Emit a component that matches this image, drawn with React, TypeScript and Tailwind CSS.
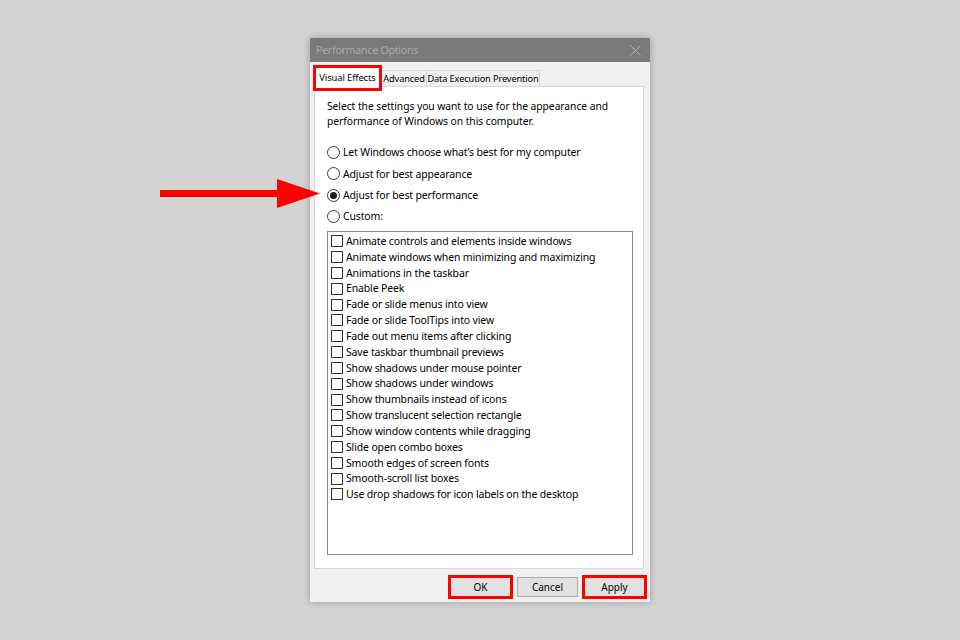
import React from "react";

const items = [
  "Animate controls and elements inside windows",
  "Animate windows when minimizing and maximizing",
  "Animations in the taskbar",
  "Enable Peek",
  "Fade or slide menus into view",
  "Fade or slide ToolTips into view",
  "Fade out menu items after clicking",
  "Save taskbar thumbnail previews",
  "Show shadows under mouse pointer",
  "Show shadows under windows",
  "Show thumbnails instead of icons",
  "Show translucent selection rectangle",
  "Show window contents while dragging",
  "Slide open combo boxes",
  "Smooth edges of screen fonts",
  "Smooth-scroll list boxes",
  "Use drop shadows for icon labels on the desktop",
];

const radios = [
  { label: "Let Windows choose what\u2019s best for my computer", on: false },
  { label: "Adjust for best appearance", on: false },
  { label: "Adjust for best performance", on: true },
  { label: "Custom:", on: false },
];

function Radio({ on }: { on: boolean }) {
  return (
    <span className="w-[13px] h-[13px] rounded-full border border-[#333333] bg-white flex items-center justify-center shrink-0">
      {on && <span className="w-[7px] h-[7px] rounded-full bg-[#1a1a1a]" />}
    </span>
  );
}

export default function App() {
  return (
    <div
      className="relative w-[960px] h-[640px] bg-[#d3d3d3] flex items-center justify-center text-[#000000]"
      style={{ fontFamily: '"Noto Sans", "Open Sans", sans-serif' }}
    >
      {/* red annotation arrow */}
      <svg
        className="absolute left-[160px] top-[178px]"
        width="162"
        height="31"
        viewBox="0 0 162 31"
      >
        <rect x="0" y="12" width="120" height="7" fill="#ff0000" />
        <polygon points="117,1 160,15.5 117,30" fill="#ff0000" />
      </svg>

      <div className="w-[340px] h-[564px] flex flex-col bg-[#f0f0f0] shadow-[0_0_7px_rgba(0,0,0,0.28)]">
        {/* title bar */}
        <div className="h-[24px] bg-[#7a7a7a] flex items-center justify-between pl-[6px] pr-[9px] shrink-0">
          <span className="text-[10.5px] tracking-[-0.2px] text-[#a9a9a9] leading-none whitespace-nowrap">Performance Options</span>
          <svg width="11" height="11" viewBox="0 0 11 11">
            <path d="M0.5 0.5 L10.5 10.5 M10.5 0.5 L0.5 10.5" stroke="#b0b0b0" strokeWidth="1" fill="none" />
          </svg>
        </div>

        {/* tabs + panel */}
        <div className="flex flex-col px-[4px] shrink-0">
          <div className="h-[24px] flex items-end relative z-10">
            <div className="relative ml-[1px] h-[20px] w-[65px] bg-white border border-b-0 border-[#d9d9d9] flex items-center justify-center mb-[-1px]">
              <span className="text-[9.4px] tracking-[-0.1px] leading-none whitespace-nowrap">Visual Effects</span>
              <span className="absolute left-[-3px] right-[-3px] top-[-3px] bottom-[-4px] border-[3px] border-[#ff0000]" />
            </div>
            <div className="h-[16px] w-[46px] bg-[#f0f0f0] border border-b-0 border-[#d9d9d9] flex items-center justify-center ml-[1px]">
              <span className="text-[9.2px] tracking-[-0.1px] leading-none whitespace-nowrap">Advanced</span>
            </div>
            <div className="h-[16px] w-[113px] bg-[#f0f0f0] border border-b-0 border-l-0 border-[#d9d9d9] flex items-center justify-center">
              <span className="text-[9.2px] tracking-[-0.1px] leading-none whitespace-nowrap">Data Execution Prevention</span>
            </div>
          </div>

          <div className="w-[330px] h-[483px] bg-white border border-[#d9d9d9] pl-[12px] pt-[12px] flex flex-col">
            <p className="text-[10.3px] tracking-[-0.05px] leading-[15px] w-[300px]">
              Select the settings you want to use for the appearance and performance of Windows on this computer.
            </p>
            <div className="mt-[13px] flex flex-col">
              {radios.map((r) => (
                <div key={r.label} className="h-[21.33px] flex items-center gap-[3px]">
                  <Radio on={r.on} />
                  <span className="text-[10.5px] tracking-[-0.15px] leading-none whitespace-nowrap">{r.label}</span>
                </div>
              ))}
            </div>
            <div className="mt-[4px] w-[306px] h-[324px] border border-[#828790] pt-[1px] pl-[3px] flex flex-col">
              {items.map((t) => (
                <div key={t} className="h-[15.83px] flex items-center gap-[3px]">
                  <span className="w-[12px] h-[12px] border border-[#333333] bg-white shrink-0" />
                  <span className="text-[10.5px] tracking-[-0.15px] leading-none whitespace-nowrap">{t}</span>
                </div>
              ))}
            </div>
          </div>
        </div>

        {/* buttons */}
        <div className="flex-1 flex items-center justify-end gap-[6px] pr-[5px] pt-[3px]">
          <div className="relative w-[61px] h-[20px] bg-[#e1e1e1] border border-[#adadad] flex items-center justify-center">
            <span className="text-[10px] leading-none">OK</span>
            <span className="absolute left-[-3px] right-[-3px] top-[-3px] bottom-[-3px] border-[3px] border-[#ff0000]" />
          </div>
          <div className="w-[61px] h-[20px] bg-[#e1e1e1] border border-[#adadad] flex items-center justify-center">
            <span className="text-[10px] leading-none">Cancel</span>
          </div>
          <div className="relative w-[61px] h-[20px] bg-[#e1e1e1] border border-[#adadad] flex items-center justify-center">
            <span className="text-[10px] leading-none">Apply</span>
            <span className="absolute left-[-3px] right-[-3px] top-[-3px] bottom-[-3px] border-[3px] border-[#ff0000]" />
          </div>
        </div>
      </div>
    </div>
  );
}
